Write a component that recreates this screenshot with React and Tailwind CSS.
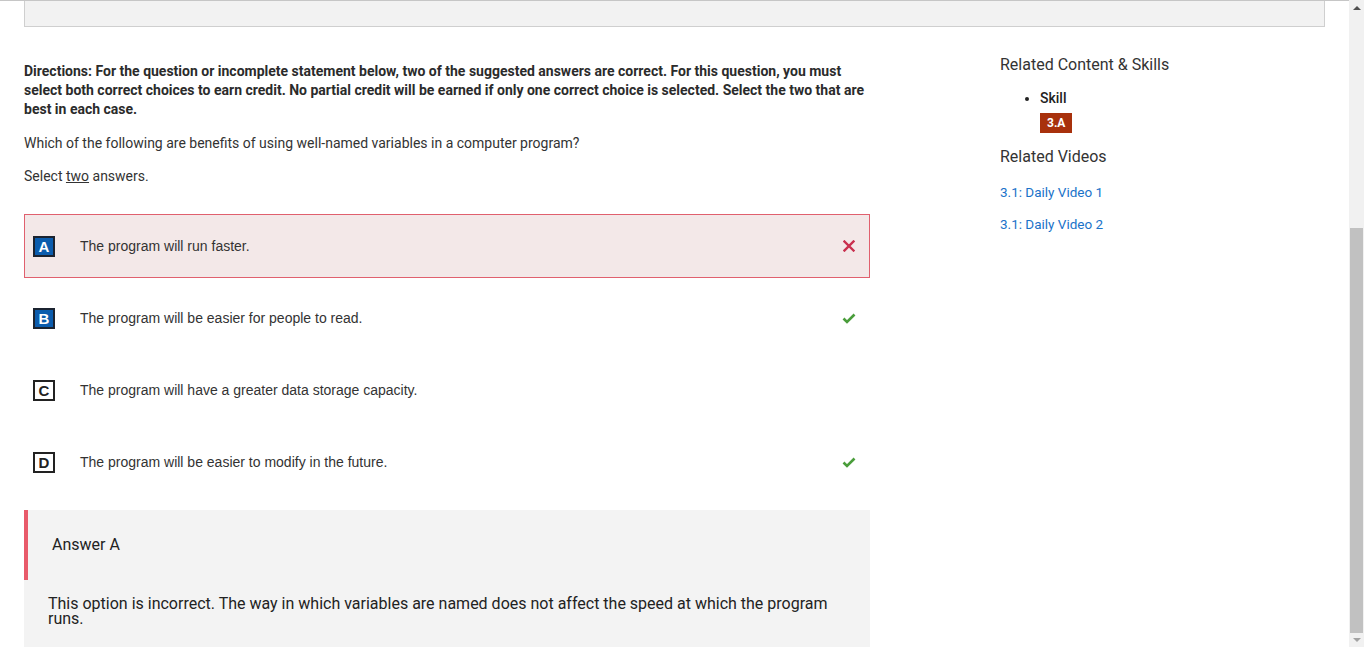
import React from 'react';

const options = [
  { letter: 'A', text: 'The program will run faster.', selected: true, mark: 'wrong' },
  { letter: 'B', text: 'The program will be easier for people to read.', selected: true, mark: 'right' },
  { letter: 'C', text: 'The program will have a greater data storage capacity.', selected: false, mark: null },
  { letter: 'D', text: 'The program will be easier to modify in the future.', selected: false, mark: 'right' },
];

function CrossIcon() {
  return (
    <svg width="12" height="12" viewBox="0 0 12 12">
      <path d="M1.5 1.5 L10.5 10.5 M10.5 1.5 L1.5 10.5" stroke="#c9304f" strokeWidth="2.4" strokeLinecap="square" />
    </svg>
  );
}

function CheckIcon() {
  return (
    <svg width="14" height="11" viewBox="0 0 14 11">
      <path d="M1.5 5.5 L5 9 L12.5 1.5" stroke="#4a9d3b" strokeWidth="2.6" fill="none" />
    </svg>
  );
}

function Option({ letter, text, selected, mark }) {
  const wrong = mark === 'wrong' && selected;
  return (
    <div
      className={
        'flex items-center h-[64px] pl-[8px] pr-[12px] border ' +
        (wrong ? 'bg-[#f3e8e8] border-[#e0606e]' : 'bg-white border-transparent')
      }
    >
      <div
        className={
          'w-[22px] h-[21px] flex items-center justify-center border-2 text-[15px] font-bold leading-none ' +
          (selected ? 'bg-[#0b5cad] border-[#1b2330] text-white' : 'bg-white border-[#222] text-[#222]')
        }
        style={{ fontFamily: '"Liberation Sans", Arial, sans-serif' }}
      >
        {letter}
      </div>
      <div
        className="ml-[25px] flex-1 text-[14px] text-[#333]"
        style={{ fontFamily: '"Liberation Sans", Arial, sans-serif' }}
      >
        {text}
      </div>
      <div className="w-[16px] flex justify-center">
        {mark === 'wrong' && <CrossIcon />}
        {mark === 'right' && <CheckIcon />}
      </div>
    </div>
  );
}

export default function App() {
  return (
    <div className="flex h-[647px] overflow-hidden bg-white" style={{ fontFamily: 'Roboto, "Noto Sans", sans-serif' }}>
      {/* page */}
      <div className="w-[1349px] border-t border-[#c6c6c6]">
        <div className="mx-[24px] h-[26px] bg-[#f2f2f2] border border-t-0 border-[#cfcfcf]" />

        <div className="flex pl-[24px] pt-[26px]">
          {/* question column */}
          <div className="w-[846px]">
            <div className="mt-[9px] text-[14px] leading-[19px] font-bold text-[#2b2b2b] pr-[6px]">
              Directions: For the question or incomplete statement below, two of the suggested answers are correct. For this question, you must select both correct choices to earn credit. No partial credit will be earned if only one correct choice is selected. Select the two that are best in each case.
            </div>
            <div className="mt-[15px] text-[14px] leading-[19px] text-[#333]">
              Which of the following are benefits of using well-named variables in a computer program?
            </div>
            <div className="mt-[14px] text-[14px] leading-[19px] text-[#333]">
              Select <span className="underline">two</span> answers.
            </div>

            <div className="mt-[28px] flex flex-col gap-[8px]">
              {options.map(o => (
                <Option key={o.letter} {...o} />
              ))}
            </div>

            {/* feedback */}
            <div className="mt-[16px] bg-[#f3f3f3] pb-[24px]">
              <div className="border-l-4 border-[#e85a6a] h-[70px] flex items-center pl-[24px] text-[16px] text-[#222]">
                Answer A
              </div>
              <div className="mt-[16px] pl-[24px] pr-[24px] text-[16px] leading-[15px] text-[#222]">
                This option is incorrect. The way in which variables are named does not affect the speed at which the program runs.
              </div>
            </div>
          </div>

          {/* related column */}
          <div className="ml-[130px] w-[300px] mt-[1px]">
            <div className="text-[16px] leading-[22px] text-[#333]">Related Content &amp; Skills</div>
            <ul className="mt-[12px] pl-[40px] list-disc">
              <li className="text-[14px] leading-[20px] font-medium text-[#222]">Skill</li>
            </ul>
            <div className="ml-[40px] mt-[5px] inline-block bg-[#a8310c] text-white text-[12px] font-bold leading-[20px] px-[7px]">
              3.A
            </div>
            <div className="mt-[12px] text-[16px] leading-[22px] text-[#333]">Related Videos</div>
            <div className="mt-[14px] text-[13.5px] leading-[20px] text-[#1a72c9]">3.1: Daily Video 1</div>
            <div className="mt-[12px] text-[13.5px] leading-[20px] text-[#1a72c9]">3.1: Daily Video 2</div>
          </div>
        </div>
      </div>

      {/* scrollbar */}
      <div className="w-[15px] h-full bg-[#f1f1f1] flex flex-col items-center">
        <div className="h-[15px] flex items-center justify-center">
          <div className="w-0 h-0 border-l-[4px] border-r-[4px] border-b-[4px] border-l-transparent border-r-transparent border-b-[#505050]" />
        </div>
        <div className="mt-[213px] w-[13px] h-[405px] bg-[#c1c1c1]" />
        <div className="flex-1" />
        <div className="h-[14px] flex items-center justify-center">
          <div className="w-0 h-0 border-l-[4px] border-r-[4px] border-t-[4px] border-l-transparent border-r-transparent border-t-[#a3a3a3]" />
        </div>
      </div>
    </div>
  );
}
